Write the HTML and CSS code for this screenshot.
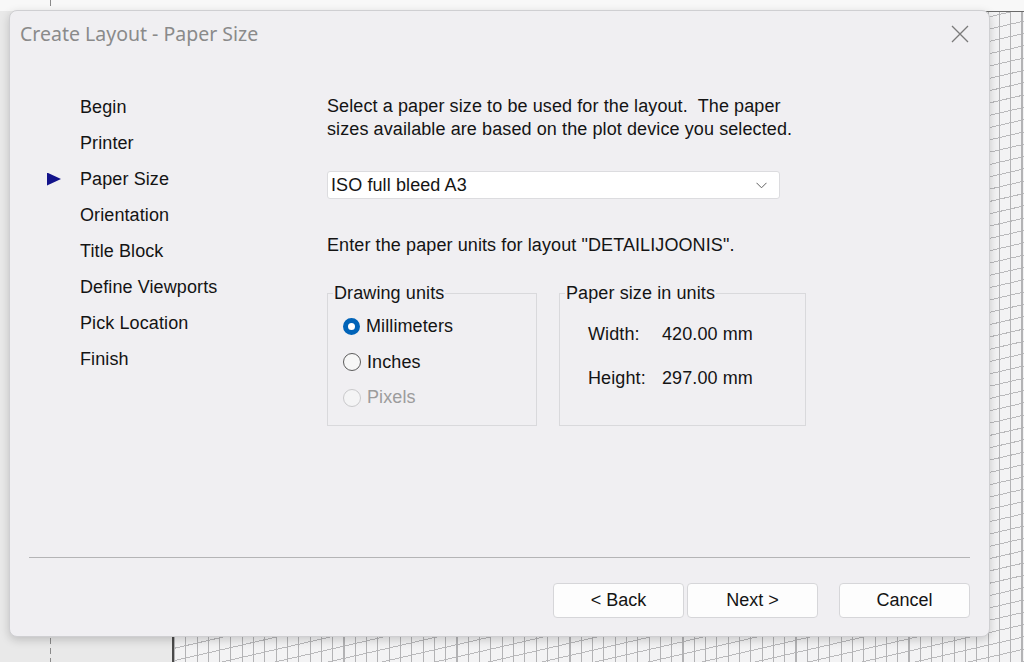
FILE: index.html
```html
<!DOCTYPE html>
<html lang="en">
<head>
  <meta charset="UTF-8">
  <title>Create Layout - Paper Size</title>
  <link rel="stylesheet" href="styles.css">
</head>
<body>
  <div class="desk">
    <div class="guide guide-top"></div>
    <div class="guide guide-bottom"></div>
    <div class="sheet"></div>

    <div class="dialog">
      <div class="titlebar">
        <span class="title">Create Layout - Paper Size</span>
        <svg class="close" width="18" height="18" viewBox="0 0 18 18">
          <path d="M1 1 L17 17 M17 1 L1 17" stroke="#7a7a7a" stroke-width="1.3" fill="none"/>
        </svg>
      </div>

      <div class="body">
        <ul class="steps">
          <li><span class="mark"></span>Begin</li>
          <li><span class="mark"></span>Printer</li>
          <li class="current"><span class="mark"></span>Paper Size</li>
          <li><span class="mark"></span>Orientation</li>
          <li><span class="mark"></span>Title Block</li>
          <li><span class="mark"></span>Define Viewports</li>
          <li><span class="mark"></span>Pick Location</li>
          <li><span class="mark"></span>Finish</li>
        </ul>

        <div class="content">
          <p class="intro">Select a paper size to be used for the layout.&nbsp; The paper<br>sizes available are based on the plot device you selected.</p>

          <div class="select">
            <span>ISO full bleed A3</span>
            <svg width="11" height="7" viewBox="0 0 11 7">
              <path d="M0.5 0.8 L5.5 5.8 L10.5 0.8" stroke="#606060" stroke-width="1" fill="none"/>
            </svg>
          </div>

          <p class="units-note">Enter the paper units for layout "DETAILIJOONIS".</p>

          <div class="groups">
            <fieldset class="group group-units">
              <legend>Drawing units</legend>
              <div class="radio checked"><span class="dot"></span>Millimeters</div>
              <div class="radio"><span class="dot"></span>Inches</div>
              <div class="radio disabled"><span class="dot"></span>Pixels</div>
            </fieldset>

            <fieldset class="group group-size">
              <legend>Paper size in units</legend>
              <div class="size-row"><span class="size-label">Width:</span><span>420.00 mm</span></div>
              <div class="size-row"><span class="size-label">Height:</span><span>297.00 mm</span></div>
            </fieldset>
          </div>
        </div>
      </div>

      <div class="footer">
        <div class="buttons">
          <button type="button">&lt; Back</button>
          <button type="button">Next &gt;</button>
          <button type="button" class="cancel">Cancel</button>
        </div>
      </div>
    </div>
  </div>
</body>
</html>
```

FILE: styles.css
```css
body {
  margin: 0;
  width: 1024px;
  height: 662px;
  overflow: hidden;
  font-family: "Liberation Sans", Arial, sans-serif;
  background: #ececec;
}

.desk {
  position: relative;
  width: 1024px;
  height: 662px;
  background: linear-gradient(#f8f8f8 0 11px, #e9e9e9 11px);
}

.guide {
  position: absolute;
  left: 50px;
  width: 1px;
  background: repeating-linear-gradient(#8a8a8a 0 6px, transparent 6px 10px);
}

.guide-top {
  top: 0;
  height: 11px;
}

.guide-bottom {
  top: 638px;
  height: 24px;
}

/* the drawing sheet behind the dialog */
.sheet {
  position: absolute;
  left: 172px;
  top: 11px;
  right: 0;
  bottom: 0;
  border-left: 2px solid #4a4a4a;
  border-top: 1px solid #6a6a6a;
  background-color: #f3f3f4;
  background-image:
    repeating-linear-gradient(90deg, #b3b3b5 0 1px, transparent 1px 11.3px),
    repeating-linear-gradient(-13deg, #b9b9bb 0 1px, transparent 1px 12px);
}

.dialog {
  position: absolute;
  left: 9px;
  top: 10px;
  width: 979px;
  height: 625px;
  display: flex;
  flex-direction: column;
  background: #f0eff2;
  border: 1px solid #cfcfd2;
  border-radius: 8px;
  box-shadow: 0 3px 10px rgba(0, 0, 0, 0.18);
  color: #141414;
}

.titlebar {
  height: 47px;
  display: flex;
  align-items: center;
  justify-content: space-between;
  padding: 0 12px 0 10px;
}

.title {
  font-family: "Noto Sans", "Open Sans", sans-serif;
  font-size: 19.5px;
  color: #8a8a8a;
  margin-top: -2px;
}

.close {
  margin-right: 8px;
  margin-top: -2px;
}

.body {
  flex: 1;
  display: flex;
  padding-top: 31px;
  font-size: 18px;
  letter-spacing: 0.1px;
}

.steps {
  list-style: none;
  margin: 0;
  padding: 0 0 0 37px;
  width: 280px;
}

.steps li {
  display: flex;
  align-items: center;
  height: 36px;
}

.mark {
  width: 14px;
  height: 13px;
  margin-right: 19px;
}

.current .mark {
  background: #12128a;
  clip-path: polygon(0 0, 100% 50%, 0 100%);
}

.content {
  padding-top: 6px;
}

.intro,
.units-note {
  margin: 0;
  line-height: 23px;
}

.select {
  margin-top: 30px;
  width: 436px;
  height: 26px;
  display: flex;
  align-items: center;
  justify-content: space-between;
  padding: 0 12px 0 3px;
  background: #fff;
  border: 1px solid #dcdcdf;
  border-radius: 3px;
}

.units-note {
  margin-top: 35px;
}

.groups {
  display: flex;
  gap: 22px;
  margin-top: 25px;
}

.group {
  margin: 0;
  padding: 0 0 9px 5px;
  border: 1px solid #d9d9dc;
  border-radius: 0;
  min-width: 0;
}

.group legend {
  padding: 0 1px;
  line-height: 23px;
}

.group-units {
  width: 203px;
}

.group-size {
  width: 240px;
}

.radio {
  display: flex;
  align-items: center;
  height: 35.5px;
  padding-left: 10px;
}

.radio:first-of-type {
  margin-top: 4px;
}

.dot {
  width: 16px;
  height: 16px;
  margin-right: 6px;
  border: 1px solid #5c5c5c;
  border-radius: 50%;
  background: #f7f7f7;
}

.radio.checked .dot {
  width: 7px;
  height: 7px;
  border: 5.5px solid #0063b8;
  background: #fff;
}

.radio.disabled {
  color: #9c9c9c;
}

.radio.disabled .dot {
  border-color: #c9c9cb;
  background: #f4f4f5;
}

.size-row {
  display: flex;
  line-height: 23px;
  padding-left: 23px;
  margin-top: 21px;
}

.size-row:first-of-type {
  margin-top: 18px;
}

.size-label {
  width: 74px;
}

.footer {
  margin: 0 19px;
  border-top: 1px solid #b4b4b6;
}

.buttons {
  display: flex;
  justify-content: flex-end;
  gap: 3px;
  padding: 25px 0 18px;
}

button {
  width: 131px;
  height: 35px;
  font-family: "Liberation Sans", Arial, sans-serif;
  font-size: 18px;
  color: #141414;
  background: #fdfdfd;
  border: 1px solid #d6d6d9;
  border-radius: 4px;
}

button.cancel {
  margin-left: 18px;
}
```
